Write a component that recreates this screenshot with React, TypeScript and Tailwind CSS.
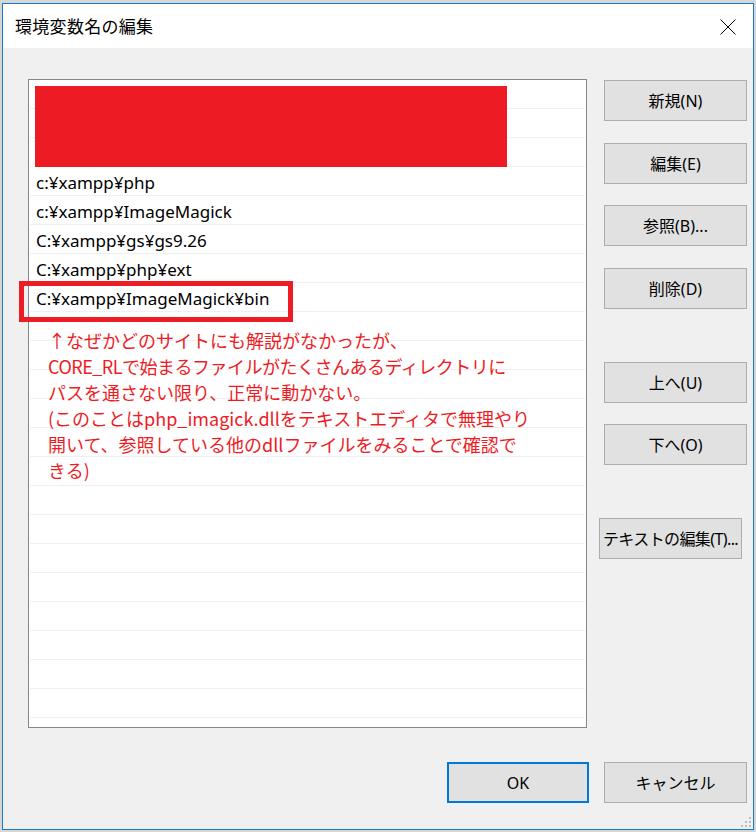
import type { ReactNode } from 'react'

const ROWS = [
  '',
  '',
  '',
  'c:¥xampp¥php',
  'c:¥xampp¥ImageMagick',
  'C:¥xampp¥gs¥gs9.26',
  'C:¥xampp¥php¥ext',
  'C:¥xampp¥ImageMagick¥bin',
  ...Array.from({ length: 15 }, () => ''),
]

const NOTE = [
  '↑なぜかどのサイトにも解説がなかったが、',
  'CORE_RLで始まるファイルがたくさんあるディレクトリに',
  'パスを通さない限り、正常に動かない。',
  '(このことはphp_imagick.dllをテキストエディタで無理やり',
  '開いて、参照している他のdllファイルをみることで確認で',
  'きる)',
]

const font = { fontFamily: '"Noto Sans", "Noto Sans CJK JP", sans-serif' }

function Button({ children, className = '' }: { children: ReactNode; className?: string }) {
  return (
    <div
      className={`flex h-[41px] w-[143px] items-center justify-center whitespace-nowrap border border-[#adadad] bg-[#e1e1e1] text-[16px] text-black ${className}`}
    >
      {children}
    </div>
  )
}

export default function App() {
  return (
    <div className="h-[832px] w-[756px] overflow-hidden bg-[#d6d6d6] pl-[2px] pt-[3px]" style={font}>
      <div className="relative flex h-[827px] w-[752px] flex-col border border-[#1979ca] bg-[#f0f0f0]">
        {/* title bar */}
        <div className="flex h-[44px] shrink-0 items-center justify-between bg-white pl-[12px] pr-[17px]">
          <span className="text-[17px] tracking-[0.3px] text-black" style={{ fontFamily: '"Noto Sans CJK JP", sans-serif' }}>
            環境変数名の編集
          </span>
          <svg width="16" height="16" viewBox="0 0 16 16" className="mt-[2px]">
            <path d="M0.5 0.5 L15.5 15.5 M15.5 0.5 L0.5 15.5" stroke="#000" strokeWidth="1" fill="none" />
          </svg>
        </div>

        {/* body */}
        <div className="flex flex-1 flex-col pl-[25px] pr-[6px] pt-[31px]">
          <div className="flex gap-[17px]">
            <div className="relative h-[649px] w-[559px] border border-[#828790] bg-white">
              <div className="h-full overflow-hidden">
                {ROWS.map((row, i) => (
                  <div
                    key={i}
                    className="mx-px flex h-[29px] items-center border-b border-[#f0f0f0] pl-[6px] pt-[3px] text-[17px] text-black"
                  >
                    {row}
                  </div>
                ))}
              </div>

              {/* redaction */}
              <div className="absolute left-[6px] top-[6px] h-[81px] w-[472px] bg-[#ed1c24]" />

              {/* highlight box */}
              <div className="absolute left-[-10px] top-[201px] h-[41px] w-[274px] border-[5px] border-[#ed1c24]" />

              {/* annotation */}
              <div
                className="absolute left-[19px] top-[247px] whitespace-nowrap text-[18px] leading-[26px] text-[#ed1c24]"
                style={{ fontFamily: '"Noto Sans CJK JP", sans-serif' }}
              >
                {NOTE.map((line, i) => (
                  <div key={i} className={i === 1 ? 'tracking-[-0.5px]' : ''}>
                    {line}
                  </div>
                ))}
              </div>
            </div>

            <div className="flex flex-col pt-px">
              <Button>新規(N)</Button>
              <Button className="mt-[22px]">編集(E)</Button>
              <Button className="mt-[21px]">参照(B)...</Button>
              <Button className="mt-[22px]">削除(D)</Button>
              <Button className="mt-[53px]">上へ(U)</Button>
              <Button className="mt-[21px]">下へ(O)</Button>
              <Button className="-ml-[5px] mt-[53px] tracking-[-0.6px]">テキストの編集(T)...</Button>
            </div>
          </div>

          <div className="mt-[34px] flex justify-end gap-[15px]">
            <div className="flex h-[41px] w-[142px] items-center justify-center border-2 border-[#0078d7] bg-[#e1e1e1] text-[16px] text-black">
              OK
            </div>
            <Button>キャンセル</Button>
          </div>
        </div>

        {/* size grip */}
        <svg width="12" height="12" viewBox="0 0 12 12" className="absolute bottom-[1px] right-[1px]">
          <g fill="#bcbcbc">
            <rect x="9" y="1" width="2" height="2" />
            <rect x="5" y="5" width="2" height="2" />
            <rect x="9" y="5" width="2" height="2" />
            <rect x="1" y="9" width="2" height="2" />
            <rect x="5" y="9" width="2" height="2" />
            <rect x="9" y="9" width="2" height="2" />
          </g>
        </svg>
      </div>
    </div>
  )
}
